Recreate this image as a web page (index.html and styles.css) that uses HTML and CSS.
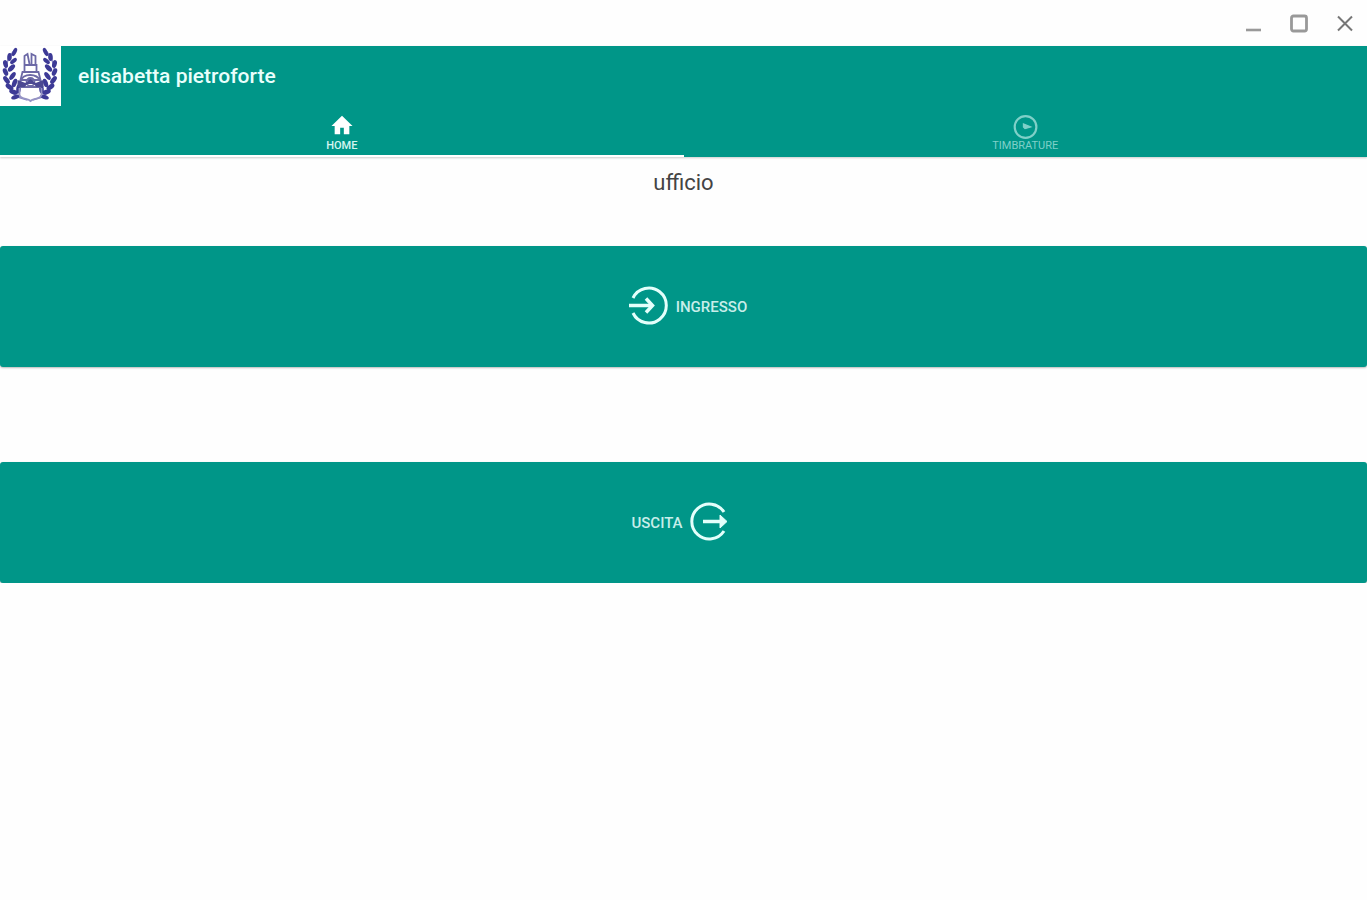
FILE: index.html
```html
<!DOCTYPE html>
<html lang="it">
<head>
<meta charset="utf-8">
<meta name="viewport" content="width=device-width, initial-scale=1">
<title>Timbrature</title>
<link rel="stylesheet" href="styles.css">
</head>
<body>
<div class="titlebar">
  <button class="window-button" type="button" aria-label="Riduci a icona">
    <svg viewBox="0 0 20 20"><path d="M3 17H18" stroke="#999" stroke-width="2.600"/></svg>
  </button>
  <button class="window-button" type="button" aria-label="Ingrandisci">
    <svg viewBox="0 0 20 20"><rect x="2.500" y="3" width="15" height="15" rx="2" stroke="#999" stroke-width="2.800"/></svg>
  </button>
  <button class="window-button" type="button" aria-label="Chiudi">
    <svg viewBox="0 0 20 20"><path d="M3 3.500L17 17.500M17 3.500L3 17.500" stroke="#777" stroke-width="2"/></svg>
  </button>
</div>
<header class="header">
  <div class="brand">
    <svg class="logo" viewBox="0 0 60 60" role="img" aria-label="Stemma">
      <defs>
        <g id="branch">
          <path d="M14 4C3 16 0 38 17 51L27 54" fill="none" stroke="#8a88c4" stroke-width="1.500"/>
          <g fill="#3d3a96">
            <ellipse cx="14" cy="6" rx="2" ry="4.500" transform="rotate(25 14 6)"/>
            <ellipse cx="9" cy="11" rx="2.300" ry="4" transform="rotate(5 9 11)"/>
            <ellipse cx="13" cy="15" rx="2" ry="4" transform="rotate(50 13 15)"/>
            <ellipse cx="5" cy="18" rx="2.300" ry="4" transform="rotate(-15 5 18)"/>
            <ellipse cx="11" cy="22" rx="2.300" ry="4.500" transform="rotate(45 11 22)"/>
            <ellipse cx="5" cy="26" rx="2.300" ry="4" transform="rotate(-25 5 26)"/>
            <ellipse cx="12" cy="30" rx="2.300" ry="4.500" transform="rotate(35 12 30)"/>
            <ellipse cx="6" cy="34" rx="2.300" ry="4.500" transform="rotate(-38 6 34)"/>
            <ellipse cx="14" cy="37" rx="2.300" ry="4.500" transform="rotate(20 14 37)"/>
            <ellipse cx="9" cy="41" rx="2.300" ry="4.500" transform="rotate(-55 9 41)"/>
            <ellipse cx="18" cy="43" rx="2.300" ry="4.500" transform="rotate(5 18 43)"/>
            <ellipse cx="13" cy="46" rx="2.300" ry="4.500" transform="rotate(-70 13 46)"/>
            <ellipse cx="15" cy="51" rx="2" ry="4.500" transform="rotate(70 15 51)"/>
          </g>
        </g>
      </defs>
      <use href="#branch"/>
      <use href="#branch" transform="matrix(-1 0 0 1 59 0)"/>
      <g fill="none" stroke="#6c69a6" stroke-width="1.800">
        <path d="M24 20V10L27 8L29 18M31 18V8L35 10V20M24 19H36V26H24Z"/>
        <path d="M22 26H38L40 34H20Z"/>
        <path d="M20 35C23 27 36 27 40 35V41H20Z"/>
        <path d="M19 42V49C21 54 27 52 30 55C33 52 39 54 41 49V42" stroke="#9694c4"/>
        <circle cx="30" cy="36" r="4"/>
      </g>
      <path d="M17 34L25 37L30 33L35 37L43 34V41H36L33 38H27L24 41H17Z" fill="#4b4892"/>
    </svg>
    <h1 class="user">elisabetta pietroforte</h1>
  </div>
  <nav class="tabs">
    <a class="tab tab-active" href="#home" aria-current="page">
      <svg class="home-icon" viewBox="0 0 24 24"><path d="M10 22V15H14V22H20V13H23.500L12 2L.5 13H4V22Z" fill="#fff"/></svg>
      <span class="home-label">HOME</span>
    </a>
    <a class="tab" href="#timbrature">
      <svg class="clock-icon" viewBox="0 0 24 24" fill="none"><circle cx="12.500" cy="12" r="10" stroke="currentColor" stroke-width="2"/><path d="M10.500 9V12L12 13.500L17.500 12Z" stroke="currentColor" stroke-width="1" fill="currentColor"/></svg>
      <span>TIMBRATURE</span>
    </a>
  </nav>
</header>
<main class="content" id="home">
  <p class="place">ufficio</p>
  <div class="actions">
    <button class="action action-in" type="button">
      <svg class="action-icon" viewBox="0 0 40 40" fill="none" stroke="#e4fffb" stroke-width="3"><path d="M4 11A17.500 17.500 0 1 1 4 26"/><path d="M0 18.500H23" stroke-width="3.500"/><path d="M17 11.500L23.500 18.500L17 25.500" stroke-width="3.500"/></svg>
      <span>INGRESSO</span>
    </button>
    <button class="action action-out" type="button">
      <span>USCITA</span>
      <svg class="action-icon" viewBox="0 0 40 40" fill="none" stroke="#e4fffb" stroke-width="3"><path d="M34 9A17.500 17.500 0 1 0 34 28"/><path d="M13 18.500H33" stroke-width="3.500"/><path d="M30 12L37 18.500L30 25Z" fill="#e4fffb" stroke-width="1"/></svg>
    </button>
  </div>
</main>
</body>
</html>
```
FILE: styles.css
```css
* {
  box-sizing: border-box;
}

body {
  margin: 0;
  background: #fefefe;
  color: #444;
  font-family: Roboto, "Liberation Sans", sans-serif;
}

button {
  border: 0;
  font-family: inherit;
}

.titlebar {
  display: flex;
  justify-content: flex-end;
  align-items: center;
  height: 46px;
}

.window-button {
  display: grid;
  place-items: center;
  width: 46px;
  height: 46px;
  padding: 0;
  background: none;
}

.window-button:last-child {
  width: 45px;
}

.window-button svg {
  width: 20px;
  height: 20px;
  fill: none;
}

.header {
  background: #009688;
  color: #e9fffc;
  box-shadow: 0 1px 2px #0003;
}

.brand {
  display: flex;
  align-items: center;
  gap: 17px;
}

.logo {
  width: 61px;
  height: 60px;
  background: #fff;
}

.user {
  margin: 0;
  font-size: 21px;
  font-weight: 500;
  line-height: 24px;
}

.tabs {
  display: grid;
  grid-template-columns: 1fr 1fr;
}

.tab {
  display: flex;
  flex-direction: column;
  align-items: center;
  height: 51px;
  padding-top: 8px;
  border-bottom: 2px solid transparent;
  color: #7fd0c8;
  font-size: 11px;
  line-height: 12px;
  text-decoration: none;
}

.tab-active {
  border-bottom-color: #fff;
  color: #d5f5f0;
}

.home-icon {
  width: 22px;
  height: 22px;
}

.home-label {
  padding-top: 4px;
  font-weight: 500;
}

.clock-icon {
  width: 26px;
  height: 26px;
}

.place {
  margin: 0;
  padding: 13px 0 50px;
  font-size: 22px;
  line-height: 26px;
  text-align: center;
}

.actions {
  display: grid;
  gap: 95px;
}

.action {
  display: flex;
  justify-content: center;
  align-items: center;
  gap: 7px;
  width: 100%;
  height: 121px;
  padding: 0;
  border-radius: 3px;
  background: #009688;
  box-shadow: 0 1px 2px #0004;
  color: #c8eeea;
  font-size: 15px;
  font-weight: 500;
}

.action-in {
  padding-left: 9px;
}

.action-out {
  padding-right: 6px;
}

.action-icon {
  width: 40px;
  height: 40px;
  overflow: visible;
}
```
